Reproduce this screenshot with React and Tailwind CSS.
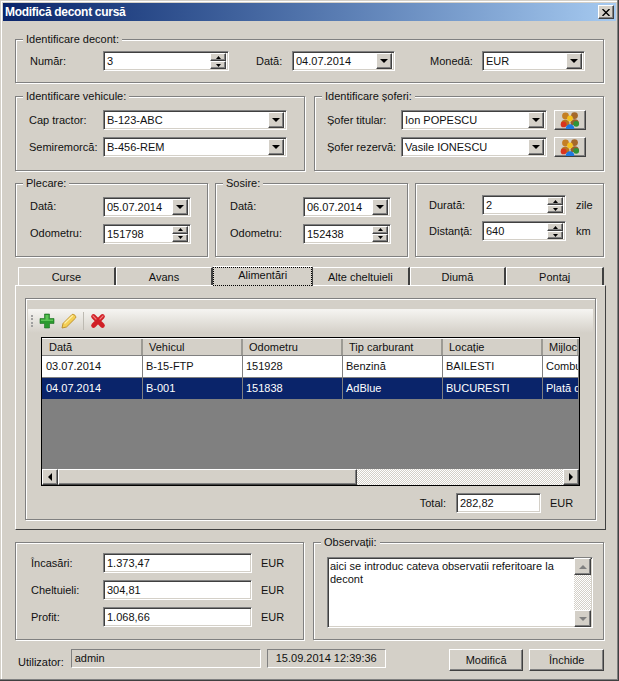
const font = { fontFamily: '"Liberation Sans", Arial, sans-serif' };

const sunken =
  "border border-t-[#808080] border-l-[#808080] border-r-white border-b-white shadow-[inset_1px_1px_0_#404040,inset_-1px_-1px_0_#d4d0c8]";
const raised =
  "bg-[#d4d0c8] border border-t-white border-l-white border-r-[#404040] border-b-[#404040] shadow-[inset_-1px_-1px_0_#808080]";

function Group({ title, className = "", children }) {
  return (
    <div className={"relative border border-[#808080] shadow-[1px_1px_0_#fff,inset_1px_1px_0_#fff] " + className}>
      {title && <span className="absolute left-[7px] -top-[8px] bg-[#d4d0c8] px-[3px] leading-[14px]">{title}</span>}
      {children}
    </div>
  );
}

function Arrow({ dir = "down", color = "#000" }) {
  const pts = {
    down: "0,0 8,0 4,4",
    up: "0,4 8,4 4,0",
    left: "4,0 4,8 0,4",
    right: "0,0 0,8 4,4",
  }[dir];
  const w = dir === "left" || dir === "right" ? 4 : 8;
  const h = dir === "left" || dir === "right" ? 8 : 4;
  return (
    <svg width={w} height={h} viewBox={`0 0 ${w} ${h}`}>
      <polygon points={pts} fill={color} />
    </svg>
  );
}

function Combo({ value, className = "" }) {
  return (
    <div className={"flex h-[20px] items-center bg-white pl-[3px] pr-[2px] " + sunken + " " + className}>
      <span className="flex-1 overflow-hidden whitespace-nowrap leading-[16px]">{value}</span>
      <div className={"flex h-[16px] w-[16px] items-center justify-center " + raised}>
        <Arrow />
      </div>
    </div>
  );
}

function Spin({ value, className = "" }) {
  return (
    <div className={"flex h-[20px] items-center bg-white pl-[3px] pr-[2px] " + sunken + " " + className}>
      <span className="flex-1 leading-[16px]">{value}</span>
      <div className="flex h-[16px] w-[16px] flex-col">
        <div className={"flex h-[8px] items-center justify-center " + raised}>
          <svg width="5" height="3" viewBox="0 0 5 3"><polygon points="0,3 5,3 2.5,0" fill="#000" /></svg>
        </div>
        <div className={"flex h-[8px] items-center justify-center " + raised}>
          <svg width="5" height="3" viewBox="0 0 5 3"><polygon points="0,0 5,0 2.5,3" fill="#000" /></svg>
        </div>
      </div>
    </div>
  );
}

function Field({ value, className = "" }) {
  return <div className={"flex h-[20px] items-center bg-white pl-[3px] " + sunken + " " + className}>{value}</div>;
}

function PeopleIcon() {
  return (
    <svg width="20" height="17" viewBox="0 0 20 17">
      <circle cx="5.5" cy="4" r="3.4" fill="#c47f24" />
      <circle cx="14.5" cy="3.6" r="3.4" fill="#a5682a" />
      <path d="M1 11 C1.5 6.5 9 6.5 9.5 11 L9 14 H2 Z" fill="#b9741f" />
      <path d="M10.5 10.5 C11 6 18.5 6 19 10.5 L18 13 H11 Z" fill="#96602c" />
      <circle cx="10" cy="6.5" r="2.9" fill="#f4c21f" />
      <path d="M5.8 17 C5.2 10.5 14.8 10.5 14.2 17 Z" fill="#1f78e0" />
      <circle cx="3.6" cy="12.4" r="2.9" fill="#d8341f" />
      <circle cx="16.2" cy="11.8" r="2.9" fill="#2f9438" />
    </svg>
  );
}

function PeopleButton() {
  return (
    <button className={"flex h-[20px] w-[32px] items-center justify-center " + raised}>
      <PeopleIcon />
    </button>
  );
}

function Label({ className = "", children }) {
  return <span className={"whitespace-nowrap " + className}>{children}</span>;
}

function Tab({ label, width, active }) {
  if (active) {
    return (
      <div className={"z-10 -mb-[1px] flex h-[19px] items-center justify-center border border-dotted border-black bg-[#d4d0c8] pb-[2px] shadow-[0_-1px_0_#fff,1px_0_0_#404040] " + width}>
        {label}
      </div>
    );
  }
  return (
    <div className={"flex h-[18px] items-center justify-center border-t border-l border-t-white border-l-white border-r-2 border-r-[#404040] bg-[#d4d0c8] pt-[1px] " + width}>
      {label}
    </div>
  );
}

const columns = [
  ["Dată", "w-[100px]"],
  ["Vehicul", "w-[100px]"],
  ["Odometru", "w-[100px]"],
  ["Tip carburant", "w-[100px]"],
  ["Locație", "w-[100px]"],
  ["Mijloc", "flex-1"],
];

const rows = [
  ["03.07.2014", "B-15-FTP", "151928", "Benzină", "BAILESTI", "Combu"],
  ["04.07.2014", "B-001", "151838", "AdBlue", "BUCURESTI", "Plată d"],
];

function Grid() {
  return (
    <div className="mx-[15px] mt-[4px] flex h-[149px] flex-col border border-black bg-[#808080]">
      <div className="flex h-[18px] shrink-0 border-t border-b border-t-white border-b-[#808080] bg-[#d4d0c8] pl-[1px]">
        {columns.map(([name, w]) => (
          <div key={name} className={"flex items-center overflow-hidden border-r-2 border-r-[#9c9a94] pl-[6px] " + w}>
            {name}
          </div>
        ))}
      </div>
      {rows.map((row, i) => (
        <div key={i} className={"flex h-[22px] shrink-0 border-b border-b-[#808080] pl-[1px] " + (i === 1 ? "bg-[#0a246a] text-white" : "bg-white")}>
          {row.map((cell, j) => (
            <div key={j} className={"flex items-center overflow-hidden whitespace-nowrap border-r border-r-[#808080] pl-[3px] " + columns[j][1]}>
              {cell}
            </div>
          ))}
        </div>
      ))}
      <div className="flex-1" />
      <div className="flex h-[16px] bg-[#d4d0c8]">
        <div className={"flex w-[16px] items-center justify-center " + raised}><Arrow dir="left" /></div>
        <div className={"w-[299px] " + raised} />
        <div className="flex-1 bg-[repeating-conic-gradient(#d4d0c8_0%_25%,#fff_0%_50%)] bg-[length:2px_2px]" />
        <div className={"flex w-[16px] items-center justify-center " + raised}><Arrow dir="right" /></div>
      </div>
    </div>
  );
}

export default function App() {
  return (
    <div style={font} className="flex h-[681px] w-[619px] flex-col bg-[#d4d0c8] p-[3px] text-[11px] text-[#111] shadow-[inset_-1px_-1px_0_#404040,inset_-2px_-2px_0_#808080,inset_1px_1px_0_#d4d0c8,inset_2px_2px_0_#fff]">
      <div className="flex h-[18px] shrink-0 items-center justify-between bg-gradient-to-r from-[#0a246a] to-[#a6caf0] px-[2px] text-[12px] font-bold tracking-[-0.3px] text-white">
        <span>Modifică decont cursă</span>
        <div className={"flex h-[14px] w-[16px] items-center justify-center " + raised}>
          <svg width="8" height="7" viewBox="0 0 8 7">
            <path d="M0.5 0 L7.5 7 M7.5 0 L0.5 7" stroke="#000" strokeWidth="1.4" />
          </svg>
        </div>
      </div>

      <div className="flex flex-col px-[12px] pt-[18px]">
        <Group title="Identificare decont:" className="flex h-[44px] items-center pl-[14px]">
          <Label className="w-[73px]">Număr:</Label>
          <Spin value="3" className="w-[126px]" />
          <Label className="ml-[27px] w-[36px]">Dată:</Label>
          <Combo value="04.07.2014" className="w-[103px]" />
          <Label className="ml-[35px] w-[52px]">Monedă:</Label>
          <Combo value="EUR" className="w-[103px]" />
        </Group>

        <div className="mt-[13px] flex gap-[9px]">
          <Group title="Identificare vehicule:" className="grid h-[75px] w-[290px] grid-cols-[74px_184px] content-center items-center gap-y-[7px] pl-[13px]">
            <Label>Cap tractor:</Label>
            <Combo value="B-123-ABC" />
            <Label>Semiremorcă:</Label>
            <Combo value="B-456-REM" />
          </Group>
          <Group title="Identificare șoferi:" className="grid h-[75px] w-[290px] grid-cols-[74px_146px_39px] content-center items-center gap-y-[7px] pl-[12px]">
            <Label>Șofer titular:</Label>
            <Combo value="Ion POPESCU" />
            <div className="ml-[7px]"><PeopleButton /></div>
            <Label>Șofer rezervă:</Label>
            <Combo value="Vasile IONESCU" />
            <div className="ml-[7px]"><PeopleButton /></div>
          </Group>
        </div>

        <div className="mt-[12px] flex gap-[7px]">
          <Group title="Plecare:" className="grid h-[74px] w-[193px] grid-cols-[73px_88px] content-center items-center gap-y-[7px] pl-[14px]">
            <Label>Dată:</Label>
            <Combo value="05.07.2014" />
            <Label>Odometru:</Label>
            <Spin value="151798" />
          </Group>
          <Group title="Sosire:" className="grid h-[74px] w-[193px] grid-cols-[73px_88px] content-center items-center gap-y-[7px] pl-[14px]">
            <Label>Dată:</Label>
            <Combo value="06.07.2014" />
            <Label>Odometru:</Label>
            <Spin value="152438" />
          </Group>
          <Group className="grid h-[74px] w-[189px] grid-cols-[53px_84px_auto] content-center items-center gap-y-[6px] pb-[4px] pl-[13px]">
            <Label>Durată:</Label>
            <Spin value="2" />
            <Label className="pl-[10px]">zile</Label>
            <Label>Distanță:</Label>
            <Spin value="640" />
            <Label className="pl-[10px]">km</Label>
          </Group>
        </div>

        <div className="mt-[10px] flex pl-[3px]">
          <Tab label="Curse" width="w-[98px]" />
          <Tab label="Avans" width="w-[98px]" />
          <Tab label="Alimentări" width="w-[99px]" active />
          <Tab label="Alte cheltuieli" width="w-[98px]" />
          <Tab label="Diumă" width="w-[97px]" />
          <Tab label="Pontaj" width="w-[98px]" />
        </div>
        <div className="h-[245px] w-[591px] border border-t-white border-l-white border-r-[#404040] border-b-[#404040] px-[9px] pt-[12px]">
          <div className="flex h-[222px] flex-col border border-[#808080] shadow-[1px_1px_0_#fff,inset_1px_1px_0_#fff]">
            <div className="mx-[2px] mt-[10px] flex h-[24px] shrink-0 items-center gap-[6px] bg-gradient-to-b from-[#f6f5f2] to-[#d4d0c8] pl-[3px]">
              <div className="h-[12px] w-[2px] border-l-2 border-dotted border-[#a0a0a0]" />
              <svg width="16" height="16" viewBox="0 0 16 16">
                <path d="M5.5 1 H10.5 V5.5 H15 V10.5 H10.5 V15 H5.5 V10.5 H1 V5.5 H5.5 Z" fill="#2b9a2e" stroke="#1d6f22" strokeWidth="0.6" />
                <path d="M6.5 2 H9.5 V6.5 H14 V8 H2 V6.5 H6.5 Z" fill="#5cc455" />
              </svg>
              <svg width="16" height="16" viewBox="0 0 16 16">
                <path d="M1 15 L2 10.5 L11 1.5 C13 0.8 15.4 3 14.6 5 L5.5 14 Z" fill="#f4cf55" stroke="#b98a22" strokeWidth="0.9" />
                <path d="M3.5 10.5 L11.8 2.5" stroke="#fff0a8" strokeWidth="1.2" />
              </svg>
              <div className="h-[18px] w-px bg-[#bdbab2]" />
              <svg width="16" height="16" viewBox="0 0 16 16">
                <path d="M3.5 3.5 L12.5 12.5 M12.5 3.5 L3.5 12.5" stroke="#d01f26" strokeWidth="4.6" strokeLinecap="round" />
                <path d="M3 3 L6 6 M13 3 L10 6" stroke="#f07a7a" strokeWidth="1.2" strokeLinecap="round" />
              </svg>
            </div>
            <Grid />
            <div className="mr-[16px] mt-[7px] flex items-center justify-end">
              <Label className="mr-[10px]">Total:</Label>
              <Field value="282,82" className="w-[85px]" />
              <Label className="ml-[9px] w-[29px]">EUR</Label>
            </div>
          </div>
        </div>

        <div className="mt-[12px] flex gap-[9px]">
          <Group className="grid h-[98px] w-[290px] grid-cols-[72px_149px_auto] content-center items-center gap-y-[7px] pb-[2px] pl-[15px]">
            <Label>Încasări:</Label>
            <Field value="1.373,47" />
            <Label className="pl-[9px]">EUR</Label>
            <Label>Cheltuieli:</Label>
            <Field value="304,81" />
            <Label className="pl-[9px]">EUR</Label>
            <Label>Profit:</Label>
            <Field value="1.068,66" />
            <Label className="pl-[9px]">EUR</Label>
          </Group>
          <Group title="Observații:" className="h-[98px] w-[292px] pl-[13px] pr-[10px] pt-[14px]">
            <div className={"flex h-[71px] bg-white pl-[2px] pr-[1px] " + sunken}>
              <p className="flex-1 pt-[2px] leading-[13px]">aici se introduc cateva observatii referitoare la decont</p>
              <div className="flex w-[17px] flex-col justify-between bg-[repeating-conic-gradient(#d4d0c8_0%_25%,#fff_0%_50%)] bg-[length:2px_2px]">
                <div className={"flex h-[17px] items-center justify-center " + raised}><Arrow dir="up" color="#808080" /></div>
                <div className={"flex h-[17px] items-center justify-center " + raised}><Arrow dir="down" color="#808080" /></div>
              </div>
            </div>
          </Group>
        </div>

        <div className="mt-[9px] flex items-start pl-[3px]">
          <Label className="w-[53px] pt-[5px]">Utilizator:</Label>
          <div className="flex h-[19px] w-[191px] items-center border border-t-[#808080] border-l-[#808080] border-r-white border-b-white pl-[3px]">admin</div>
          <div className="ml-[6px] flex h-[19px] w-[120px] items-center justify-center border border-t-[#808080] border-l-[#808080] border-r-white border-b-white">15.09.2014 12:39:36</div>
          <button className={"ml-[63px] h-[22px] w-[75px] " + raised}>Modifică</button>
          <button className={"ml-[6px] h-[22px] w-[75px] " + raised}>Închide</button>
        </div>
      </div>
    </div>
  );
}
